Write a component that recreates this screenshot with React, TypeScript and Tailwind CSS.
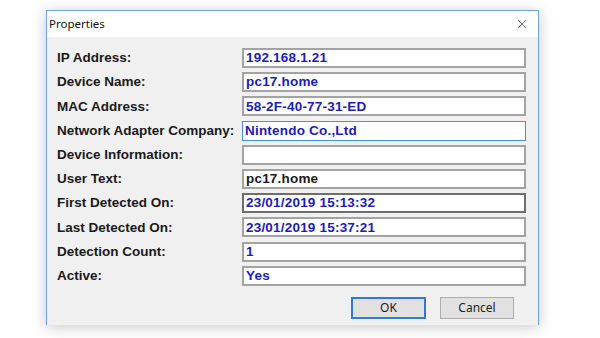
import { X } from "lucide-react";

type Row = {
  label: string;
  value: string;
  tone?: "blue" | "black";
  frame?: "normal" | "focus" | "dark";
};

const rows: Row[] = [
  { label: "IP Address:", value: "192.168.1.21" },
  { label: "Device Name:", value: "pc17.home" },
  { label: "MAC Address:", value: "58-2F-40-77-31-ED" },
  { label: "Network Adapter Company:", value: "Nintendo Co.,Ltd", frame: "focus" },
  { label: "Device Information:", value: "" },
  { label: "User Text:", value: "pc17.home", tone: "black" },
  { label: "First Detected On:", value: "23/01/2019 15:13:32", frame: "dark" },
  { label: "Last Detected On:", value: "23/01/2019 15:37:21" },
  { label: "Detection Count:", value: "1" },
  { label: "Active:", value: "Yes" },
];

function Field({ row }: { row: Row }) {
  const frame =
    row.frame === "focus"
      ? "border-[#4a90e2] border-[1.5px]"
      : row.frame === "dark"
        ? "border-[#6e6e6e] border-2"
        : "border-[#a3a3a3] border-2";
  return (
    <div className="flex items-center h-[20px]">
      <div className="w-[185px] text-[13.5px] font-bold text-[#1a1a1a] leading-none">{row.label}</div>
      <div
        className={`w-[284px] h-[20px] bg-white flex items-center pl-[2px] text-[13.5px] font-bold leading-none tracking-[0.2px] ${frame} ${
          row.tone === "black" ? "text-[#1a1a1a]" : "text-[#1c1cb8]"
        }`}
      >
        {row.value}
      </div>
    </div>
  );
}

export default function App() {
  return (
    <div className="w-[600px] h-[338px] bg-white pl-[46px] pt-[10px] overflow-hidden" style={{ fontFamily: '"Liberation Sans", Arial, sans-serif' }}>
      <div className="w-[493px] h-[315px] flex flex-col border-x border-t border-[#6ea4e4] shadow-[0_2px_14px_rgba(0,0,0,0.22)]">
        <div className="h-[26px] bg-white flex items-center justify-between pl-[2px] pr-[9px]">
          <span className="text-[11.5px] text-[#111]" style={{ fontFamily: '"Noto Sans", "Open Sans", sans-serif' }}>
            Properties
          </span>
          <X size={14} strokeWidth={1.2} className="text-[#222]" />
        </div>
        <div className="flex-1 bg-[#f0f0f0] flex flex-col pl-[10px] pt-[11px]">
          <div className="flex flex-col gap-[4.2px]">
            {rows.map((r) => (
              <Field key={r.label} row={r} />
            ))}
          </div>
          <div className="flex justify-end gap-[14px] pr-[24px] mt-[11px]">
            <button className="w-[75px] h-[22px] bg-[#e1e1e1] border-2 border-[#2f7ad6] text-[12px] text-[#222]" style={{ fontFamily: '"Noto Sans", sans-serif' }}>
              OK
            </button>
            <button className="w-[74px] h-[22px] bg-[#e1e1e1] border border-[#adadad] text-[12px] text-[#222]" style={{ fontFamily: '"Noto Sans", sans-serif' }}>
              Cancel
            </button>
          </div>
        </div>
      </div>
    </div>
  );
}
